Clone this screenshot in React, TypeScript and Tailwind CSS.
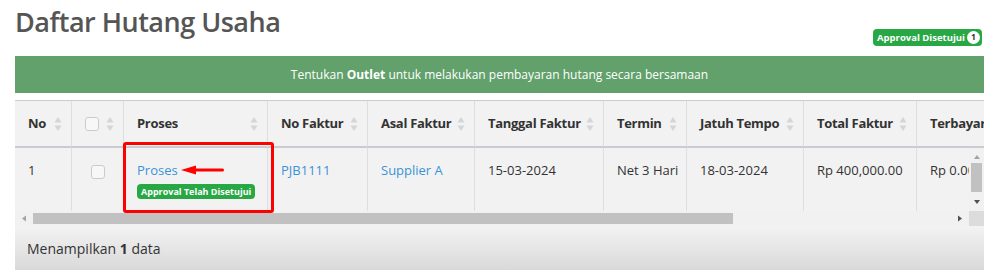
import React from "react";

const font = { fontFamily: '"Open Sans", "Noto Sans", sans-serif' };

function Sort() {
  return (
    <svg width="8" height="16" viewBox="0 0 8 16" className="shrink-0">
      <path d="M4 1 L7.5 6.5 L0.5 6.5 Z" fill="#d3d6d9" />
      <path d="M4 15 L7.5 9.5 L0.5 9.5 Z" fill="#d3d6d9" />
    </svg>
  );
}

const cols = [
  { w: 57, label: "No" },
  { w: 52, label: "" },
  { w: 144, label: "Proses" },
  { w: 100, label: "No Faktur" },
  { w: 107, label: "Asal Faktur" },
  { w: 129, label: "Tanggal Faktur" },
  { w: 83, label: "Termin" },
  { w: 117, label: "Jatuh Tempo" },
  { w: 113, label: "Total Faktur" },
  { w: 120, label: "Terbayar" },
];

function Checkbox() {
  return <span className="inline-block w-[14px] h-[14px] rounded-[3px] border border-[#c9cccf] bg-[#f7f7f7]" />;
}

export default function App() {
  return (
    <div className="w-[1001px] h-[274px] bg-white overflow-hidden text-[13px] text-[#333]" style={font}>
      <div className="pl-[15px] pr-[17px]">
        <div className="h-[56px] flex items-start justify-between">
          <h1 className="text-[27px] leading-none font-semibold text-[#555] mt-[8px] tracking-[-0.5px]">Daftar Hutang Usaha</h1>
          <span className="mt-[29px] mr-[2px] h-[17px] pl-[4px] pr-[2px] rounded-[4px] bg-[#28a745] text-white text-[9.5px] font-bold flex items-center gap-[2px] leading-none">
            Approval Disetujui
            <span className="w-[13px] h-[13px] rounded-full bg-white text-[#333] text-[8.5px] flex items-center justify-center">1</span>
          </span>
        </div>
        <div className="h-[37px] bg-[#62a16b] text-white flex items-center justify-center text-[12px]">
          <span>
            Tentukan <b>Outlet</b> untuk melakukan pembayaran hutang secara bersamaan
          </span>
        </div>
      </div>

      <div className="ml-[15px] mt-[7px] w-[969px] relative">
        {/* header */}
        <div className="border-t border-[#c9cdd1] bg-[#f2f2f2]">
          <div className="w-[969px] overflow-hidden">
            <div className="flex h-[47px] tracking-[-0.3px]">
              {cols.map((c, i) => (
                <div
                  key={i}
                  style={{ width: c.w }}
                  className={`shrink-0 flex items-center justify-between pl-[13px] pr-[9px] font-bold text-[#333] border-b-2 border-b-[#c9cdd1] ${i < cols.length - 1 ? "border-r border-r-[#dcdfe2]" : ""}`}
                >
                  {i === 1 ? <Checkbox /> : <span className="whitespace-nowrap">{c.label}</span>}
                  {i < cols.length - 1 && <Sort />}
                </div>
              ))}
            </div>
          </div>
        </div>
        {/* body */}
        <div className="flex h-[63px] bg-[#f2f2f2]">
          <div className="w-[954px] overflow-hidden">
            <div className="flex h-[63px]">
              {cols.map((c, i) => (
                <div
                  key={i}
                  style={{ width: c.w }}
                  className={`shrink-0 pl-[13px] pt-[12px] leading-[20px] whitespace-nowrap ${i < cols.length - 1 ? "border-r border-[#dcdfe2]" : ""}`}
                >
                  {i === 0 && "1"}
                  {i === 1 && (
                    <div className="pl-[6px] pt-[4px]">
                      <Checkbox />
                    </div>
                  )}
                  {i === 2 && (
                    <div>
                      <div className="flex items-center">
                        <span className="text-[#3a93d8]">Proses</span>
                        <svg width="44" height="10" viewBox="0 0 44 10" className="ml-[3px]">
                          <path d="M0 5 L15 0.5 L15 9.5 Z" fill="#f00" />
                          <rect x="12" y="3.5" width="31" height="3" rx="1.5" fill="#f00" />
                        </svg>
                      </div>
                      <span className="inline-flex mt-[2px] h-[15px] items-center px-[4px] rounded-[4px] bg-[#28a745] text-white text-[9px] font-bold leading-none">
                        Approval Telah Disetujui
                      </span>
                    </div>
                  )}
                  {i === 3 && <span className="text-[#3a93d8]">PJB1111</span>}
                  {i === 4 && <span className="text-[#3a93d8]">Supplier A</span>}
                  {i === 5 && "15-03-2024"}
                  {i === 6 && "Net 3 Hari"}
                  {i === 7 && "18-03-2024"}
                  {i === 8 && "Rp 400,000.00"}
                  {i === 9 && "Rp 0.00"}
                </div>
              ))}
            </div>
          </div>
          <div className="w-[15px] bg-[#f1f1f1] flex flex-col items-center">
            <svg width="8" height="14" viewBox="0 0 8 14" className="mt-[1px]">
              <path d="M4 6 L7 10 L1 10 Z" fill="#a3a3a3" />
            </svg>
            <div className="w-[11px] h-[29px] bg-[#c1c1c1]" />
            <div className="flex-1" />
            <svg width="8" height="14" viewBox="0 0 8 14" className="mb-[1px]">
              <path d="M1 4 L7 4 L4 8 Z" fill="#505050" />
            </svg>
          </div>
        </div>
        {/* h scroll */}
        <div className="flex h-[15px]">
          <div className="w-[954px] bg-[#f1f1f1] flex items-center">
            <svg width="14" height="15" viewBox="0 0 14 15" className="ml-[2px]">
              <path d="M5 7.5 L9 4.5 L9 10.5 Z" fill="#a3a3a3" />
            </svg>
            <div className="ml-[2px] w-[700px] h-[11px] bg-[#c1c1c1]" />
            <div className="flex-1" />
            <svg width="14" height="15" viewBox="0 0 14 15" className="mr-[2px]">
              <path d="M9 7.5 L5 4.5 L5 10.5 Z" fill="#505050" />
            </svg>
          </div>
          <div className="w-[15px] bg-[#dcdcdc]" />
        </div>
        {/* footer */}
        <div className="h-[44px] bg-gradient-to-b from-[#f3f3f3] to-[#d9d9d9] flex items-center pl-[12px] text-[14px]">
          <span>
            Menampilkan <b>1</b> data
          </span>
        </div>

        {/* annotation box */}
        <div className="absolute left-[108px] top-[42px] w-[151px] h-[71px] border-[3px] border-[#ff0000] rounded-[3px] pointer-events-none" />
      </div>
    </div>
  );
}
